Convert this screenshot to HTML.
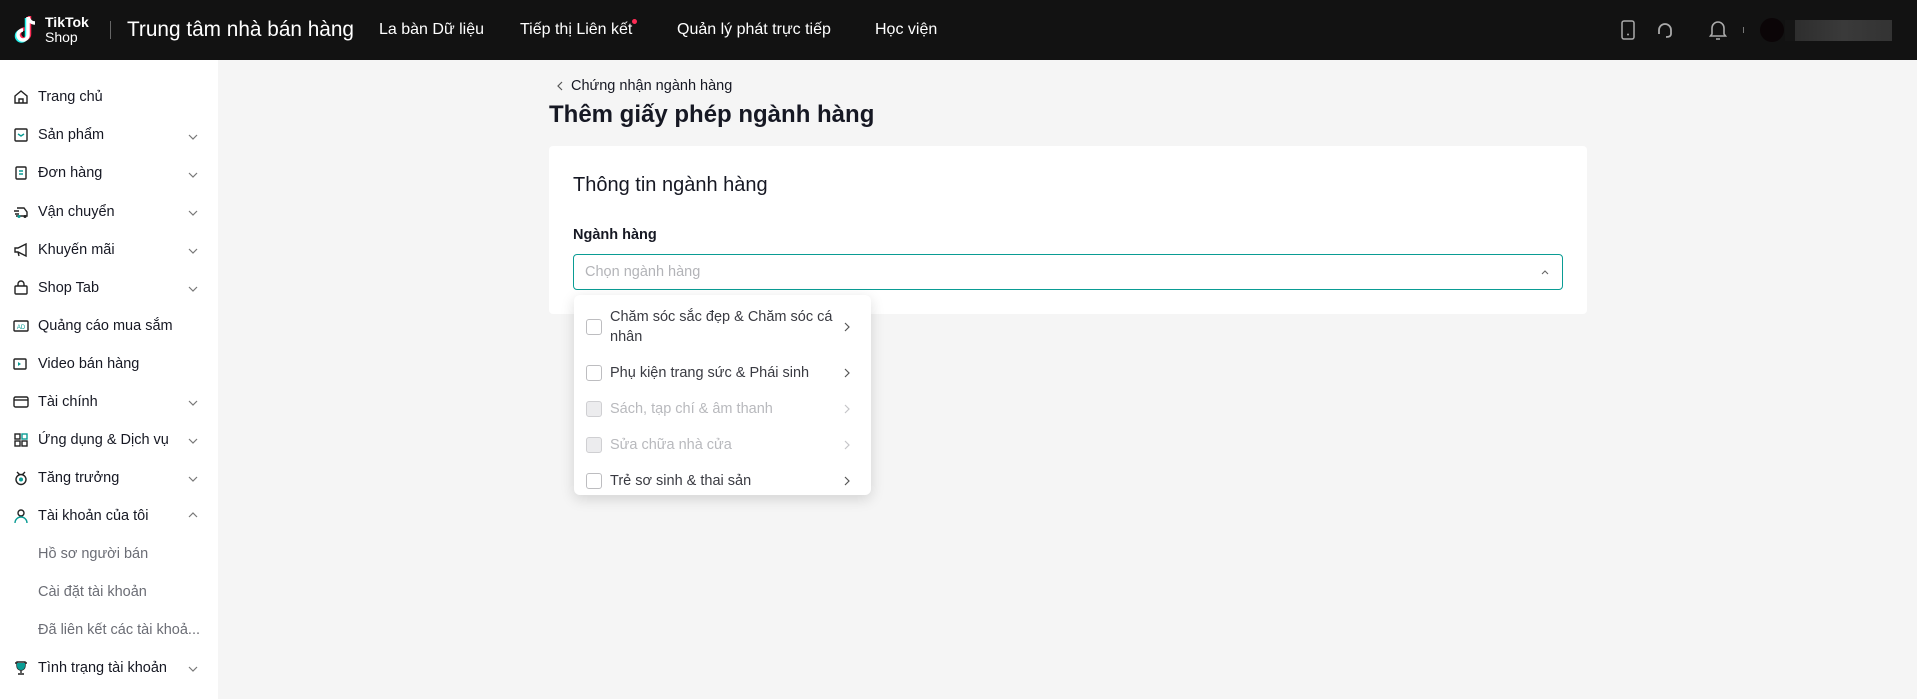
<!DOCTYPE html>
<html><head><meta charset="utf-8"><style>
*{box-sizing:border-box;margin:0;padding:0}
body{width:1917px;height:699px;background:#f5f5f5;font-family:"Liberation Sans","Noto Sans CJK SC",sans-serif;position:relative;overflow:hidden;color:#161823}
.hdr{position:absolute;left:0;top:0;width:1917px;height:60px;background:#121212;color:#fff}
.hdr .t{position:absolute;top:0;line-height:60px;white-space:nowrap}
.side{position:absolute;left:0;top:60px;width:218px;height:639px;background:#fff}
.side .in{position:absolute;left:0;top:2px;width:218px;height:630px}
.it{position:absolute;left:38px;font-size:14.5px;color:#161823;white-space:nowrap;line-height:20px}
.sub{color:#6b6d75}
.ic{position:absolute;left:13px;width:16px;height:16px}
.chev{position:absolute;left:187px;width:12px;height:12px}
.card{position:absolute;left:549px;top:146px;width:1038px;height:168px;background:#fff;border-radius:4px}
.dd{position:absolute;left:574px;top:295px;width:297px;height:200px;background:#fff;border-radius:6px;box-shadow:0 4px 14px rgba(0,0,0,.14)}
.row{position:absolute;left:12px;font-size:14.5px;color:#3a3b42;line-height:20px}
.cb{position:absolute;left:12px;width:16px;height:16px;border:1px solid #bdbdc0;border-radius:3px;background:#fff}
.cb.d{background:#ececee;border-color:#cfcfd2}
.ar{position:absolute;left:268px;width:10px;height:12px}
</style></head><body>
<div class="hdr">
<svg style="position:absolute;left:13px;top:15px" width="28" height="30" viewBox="0 0 28 30"><path d="M15 2v18a5 5 0 1 1-5-5" stroke="#25f4ee" stroke-width="3.5" fill="none" transform="translate(-1.5,1)"/><path d="M15 2v18a5 5 0 1 1-5-5" stroke="#fe2c55" stroke-width="3.5" fill="none" transform="translate(1.5,-1)"/><path d="M15 2v18a5 5 0 1 1-5-5M15 2c1 4 4 6 7 6" stroke="#fff" stroke-width="3.5" fill="none"/></svg>
<div class="t" style="left:45px;top:14px;line-height:16px;font-size:14px;font-weight:bold">TikTok</div>
<div class="t" style="left:45px;top:29px;line-height:16px;font-size:14px">Shop</div>
<div style="position:absolute;left:110px;top:21px;width:1px;height:18px;background:#666"></div>
<div class="t" style="left:127px;font-size:20.8px">Trung tâm nhà bán hàng</div>
<div class="t" style="left:379px;font-size:16px">La bàn Dữ liệu</div>
<div class="t" style="left:520px;font-size:16px">Tiếp thị Liên kết</div>
<div style="position:absolute;left:632px;top:19px;width:5px;height:5px;border-radius:50%;background:#fe2c55"></div>
<div class="t" style="left:677px;font-size:16px">Quản lý phát trực tiếp</div>
<div class="t" style="left:875px;font-size:16px">Học viện</div>
<svg style="position:absolute;left:1621px;top:20px" width="14" height="20"><rect x="1" y="1" width="12" height="18" rx="2" fill="none" stroke="#aaa" stroke-width="1.5"/><circle cx="7" cy="14.5" r="1" fill="#aaa"/></svg>
<svg style="position:absolute;left:1656px;top:21px" width="18" height="18"><path d="M3 11V9a6 6 0 0 1 12 0v2M3 9v4M15 9v4M15 13c0 2-2 3-5 3" fill="none" stroke="#aaa" stroke-width="1.8"/></svg>
<svg style="position:absolute;left:1709px;top:19px" width="18" height="22"><path d="M3 15V9a6 6 0 0 1 12 0v6l1.5 2h-15z M7 20h4" fill="none" stroke="#aaa" stroke-width="1.6"/></svg>
<div style="position:absolute;left:1743px;top:27px;width:1px;height:6px;background:#777"></div>
<div style="position:absolute;left:1760px;top:18px;width:24px;height:24px;border-radius:50%;background:#0b0507"></div>
<div style="position:absolute;left:1785px;top:20px;width:10px;height:21px;background:#151515"></div>
<div style="position:absolute;left:1795px;top:20px;width:97px;height:21px;background:linear-gradient(90deg,#2e2e2e,#3a3a3a,#333)"></div>
</div>
<div class="side"><div class="in">
<svg class="ic" style="top:27px" viewBox="0 0 16 16"><path d="M2 7l6-5 6 5v7H2z M6 14v-4h4v4" fill="none" stroke="#222" stroke-width="1.4"/></svg><div class="it" style="top:25px">Trang chủ</div>
<svg class="ic" style="top:65px" viewBox="0 0 16 16"><rect x="2" y="2" width="12" height="12" rx="1" fill="none" stroke="#222" stroke-width="1.4"/><path d="M5 7l3 2 3-2" fill="none" stroke="#0a9c94" stroke-width="1.4"/></svg><div class="it" style="top:63px">Sản phẩm</div>
<svg class="ic" style="top:103px" viewBox="0 0 16 16"><rect x="3" y="2" width="10" height="12" rx="1" fill="none" stroke="#222" stroke-width="1.4"/><path d="M6 6h4M6 9h4" stroke="#0a9c94" stroke-width="1.4"/></svg><div class="it" style="top:101px">Đơn hàng</div>
<svg class="ic" style="top:142px" viewBox="0 0 16 16"><path d="M4 4h7l3 4v4H3M1 7h5M2 10h4" fill="none" stroke="#222" stroke-width="1.4"/><circle cx="6" cy="12.5" r="1.5" fill="#0a9c94"/><circle cx="12" cy="12.5" r="1.5" fill="#222"/></svg><div class="it" style="top:140px">Vận chuyển</div>
<svg class="ic" style="top:180px" viewBox="0 0 16 16"><path d="M2 6h3l8-4v12l-8-4H2z M5 10l1 4" fill="none" stroke="#222" stroke-width="1.4"/></svg><div class="it" style="top:178px">Khuyến mãi</div>
<svg class="ic" style="top:218px" viewBox="0 0 16 16"><rect x="2" y="6" width="12" height="8" rx="1" fill="none" stroke="#222" stroke-width="1.4"/><path d="M5 6V4a3 3 0 0 1 6 0v2" fill="none" stroke="#222" stroke-width="1.4"/></svg><div class="it" style="top:216px">Shop Tab</div>
<svg class="ic" style="top:256px" viewBox="0 0 16 16"><rect x="1" y="3" width="14" height="10" rx="1" fill="none" stroke="#222" stroke-width="1.4"/><text x="8" y="11" font-size="6" text-anchor="middle" fill="#0a9c94" font-family="Liberation Sans">AD</text></svg><div class="it" style="top:254px">Quảng cáo mua sắm</div>
<svg class="ic" style="top:294px" viewBox="0 0 16 16"><rect x="1" y="3" width="12" height="10" rx="1" fill="none" stroke="#222" stroke-width="1.4"/><path d="M5 6l3 2-3 2z" fill="#0a9c94"/></svg><div class="it" style="top:292px">Video bán hàng</div>
<svg class="ic" style="top:332px" viewBox="0 0 16 16"><rect x="1" y="3" width="14" height="10" rx="1.5" fill="none" stroke="#222" stroke-width="1.4"/><path d="M1 6h14" stroke="#222" stroke-width="1.4"/></svg><div class="it" style="top:330px">Tài chính</div>
<svg class="ic" style="top:370px" viewBox="0 0 16 16"><rect x="2" y="2" width="5" height="5" fill="none" stroke="#222" stroke-width="1.4"/><rect x="9" y="2" width="5" height="5" fill="none" stroke="#0a9c94" stroke-width="1.4"/><rect x="2" y="9" width="5" height="5" fill="none" stroke="#222" stroke-width="1.4"/><rect x="9" y="9" width="5" height="5" fill="none" stroke="#222" stroke-width="1.4"/></svg><div class="it" style="top:368px">Ứng dụng &amp; Dịch vụ</div>
<svg class="ic" style="top:408px" viewBox="0 0 16 16"><circle cx="8" cy="9.5" r="5" fill="none" stroke="#222" stroke-width="1.4"/><path d="M4 2l3 3M12 2l-3 3" stroke="#222" stroke-width="1.4"/><circle cx="8" cy="9.5" r="2" fill="#0a9c94"/></svg><div class="it" style="top:406px">Tăng trưởng</div>
<svg class="ic" style="top:446px" viewBox="0 0 16 16"><circle cx="8" cy="5" r="3" fill="none" stroke="#222" stroke-width="1.4"/><path d="M2 15a6 6 0 0 1 12 0" fill="none" stroke="#0a9c94" stroke-width="1.4"/></svg><div class="it" style="top:444px">Tài khoản của tôi</div>
<div class="it sub" style="top:482px">Hồ sơ người bán</div>
<div class="it sub" style="top:520px">Cài đặt tài khoản</div>
<div class="it sub" style="top:558px">Đã liên kết các tài khoả...</div>
<svg class="ic" style="top:598px" viewBox="0 0 16 16"><path d="M4 2h8v4a4 4 0 0 1-8 0z M2 3h2M12 3h2M8 10v3M5 14h6" fill="none" stroke="#222" stroke-width="1.4"/><path d="M4 3h8v3a4 4 0 0 1-8 0z" fill="#0a9c94"/></svg><div class="it" style="top:596px">Tình trạng tài khoản</div>
<svg class="chev" style="top:69px" viewBox="0 0 12 12"><path d="M2 4l4 4 4-4" fill="none" stroke="#777" stroke-width="1.2"/></svg>
<svg class="chev" style="top:107px" viewBox="0 0 12 12"><path d="M2 4l4 4 4-4" fill="none" stroke="#777" stroke-width="1.2"/></svg>
<svg class="chev" style="top:145px" viewBox="0 0 12 12"><path d="M2 4l4 4 4-4" fill="none" stroke="#777" stroke-width="1.2"/></svg>
<svg class="chev" style="top:183px" viewBox="0 0 12 12"><path d="M2 4l4 4 4-4" fill="none" stroke="#777" stroke-width="1.2"/></svg>
<svg class="chev" style="top:221px" viewBox="0 0 12 12"><path d="M2 4l4 4 4-4" fill="none" stroke="#777" stroke-width="1.2"/></svg>
<svg class="chev" style="top:335px" viewBox="0 0 12 12"><path d="M2 4l4 4 4-4" fill="none" stroke="#777" stroke-width="1.2"/></svg>
<svg class="chev" style="top:373px" viewBox="0 0 12 12"><path d="M2 4l4 4 4-4" fill="none" stroke="#777" stroke-width="1.2"/></svg>
<svg class="chev" style="top:411px" viewBox="0 0 12 12"><path d="M2 4l4 4 4-4" fill="none" stroke="#777" stroke-width="1.2"/></svg>
<svg class="chev" style="top:447px" viewBox="0 0 12 12"><path d="M2 8l4-4 4 4" fill="none" stroke="#777" stroke-width="1.2"/></svg>
<svg class="chev" style="top:601px" viewBox="0 0 12 12"><path d="M2 4l4 4 4-4" fill="none" stroke="#777" stroke-width="1.2"/></svg>
</div></div>
<svg style="position:absolute;left:556px;top:80px" width="8" height="12"><path d="M6 2L2 6l4 4" fill="none" stroke="#555" stroke-width="1.2"/></svg>
<div style="position:absolute;left:571px;top:77px;font-size:14.5px;line-height:18px;color:#161823">Chứng nhận ngành hàng</div>
<div style="position:absolute;left:549px;top:100px;font-size:24px;font-weight:bold;line-height:30px">Thêm giấy phép ngành hàng</div>
<div class="card">
<div style="position:absolute;left:24px;top:26px;font-size:20px;line-height:26px">Thông tin ngành hàng</div>
<div style="position:absolute;left:24px;top:79px;font-size:14.5px;font-weight:bold;line-height:20px;color:#161823">Ngành hàng</div>
<div style="position:absolute;left:24px;top:108px;width:990px;height:36px;border:1px solid #0a9c94;border-radius:4px">
<div style="position:absolute;left:11px;top:8px;font-size:14.5px;color:#b3b4b8;line-height:18px">Chọn ngành hàng</div>
<svg style="position:absolute;right:12px;top:12px" width="10" height="10"><path d="M2 7l3-3 3 3" fill="none" stroke="#666" stroke-width="1.1"/></svg>
</div></div>
<div class="dd">
<div class="cb" style="top:24px"></div><div class="row" style="left:36px;top:12px;width:225px">Chăm sóc sắc đẹp &amp; Chăm sóc cá nhân</div>
<svg class="ar" style="top:26px"><path d="M3 2l4 4-4 4" fill="none" stroke="#555" stroke-width="1.2"/></svg>
<div class="cb" style="top:70px"></div><div class="row" style="left:36px;top:68px">Phụ kiện trang sức &amp; Phái sinh</div>
<svg class="ar" style="top:72px"><path d="M3 2l4 4-4 4" fill="none" stroke="#555" stroke-width="1.2"/></svg>
<div class="cb d" style="top:106px"></div><div class="row" style="left:36px;top:104px;color:#b8b9bd">Sách, tạp chí &amp; âm thanh</div>
<svg class="ar" style="top:108px"><path d="M3 2l4 4-4 4" fill="none" stroke="#c5c5c8" stroke-width="1.2"/></svg>
<div class="cb d" style="top:142px"></div><div class="row" style="left:36px;top:140px;color:#b8b9bd">Sửa chữa nhà cửa</div>
<svg class="ar" style="top:144px"><path d="M3 2l4 4-4 4" fill="none" stroke="#c5c5c8" stroke-width="1.2"/></svg>
<div class="cb" style="top:178px"></div><div class="row" style="left:36px;top:176px">Trẻ sơ sinh &amp; thai sản</div>
<svg class="ar" style="top:180px"><path d="M3 2l4 4-4 4" fill="none" stroke="#555" stroke-width="1.2"/></svg>
</div>
</body></html>
